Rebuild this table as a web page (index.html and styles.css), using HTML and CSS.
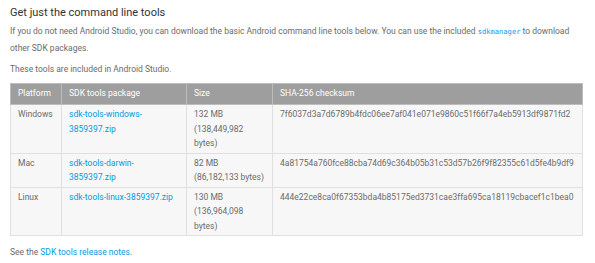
FILE: index.html
```html
<!DOCTYPE html>
<html lang="en">

<head>
    <meta charset="UTF-8">
    <meta name="viewport" content="width=device-width, initial-scale=1.0">
    <title>Get just the command line tools</title>
    <link rel="stylesheet" href="styles.css">
</head>

<body>
    <div class="section">
        <h2 class="title">Get just the command line tools</h2>
        <p>If you do not need Android Studio, you can download the basic Android command line tools below. You can use the included <code>sdkmanager</code> to download other SDK packages.</p>
        <p>These tools are included in Android Studio.</p>

        <table class="downloads">
            <thead>
                <tr>
                    <th class="col-platform">Platform</th>
                    <th class="col-package">SDK tools package</th>
                    <th class="col-size">Size</th>
                    <th>SHA-256 checksum</th>
                </tr>
            </thead>
            <tbody>
                <tr>
                    <td>Windows</td>
                    <td><a href="#">sdk-tools-windows-3859397.zip</a></td>
                    <td>132 MB<br>(138,449,982 bytes)</td>
                    <td>7f6037d3a7d6789b4fdc06ee7af041e071e9860c51f66f7a4eb5913df9871fd2</td>
                </tr>
                <tr>
                    <td>Mac</td>
                    <td><a href="#">sdk-tools-darwin-3859397.zip</a></td>
                    <td>82 MB<br>(86,182,133 bytes)</td>
                    <td>4a81754a760fce88cba74d69c364b05b31c53d57b26f9f82355c61d5fe4b9df9</td>
                </tr>
                <tr>
                    <td>Linux</td>
                    <td><a href="#">sdk-tools-linux-3859397.zip</a></td>
                    <td>130 MB<br>(136,964,098 bytes)</td>
                    <td>444e22ce8ca0f67353bda4b85175ed3731cae3ffa695ca18119cbacef1c1bea0</td>
                </tr>
            </tbody>
        </table>

        <p class="notes">See the <a href="#">SDK tools release notes</a>.</p>
    </div>
</body>

</html>
```

FILE: styles.css
```css
body {
    font-family: Roboto, 'Liberation Sans', sans-serif;
    background-color: #fff;
    color: #6b6b6b;
    margin: 0;
    font-size: 8.5px;
    line-height: 16px;
}

.section {
    padding: 5px 10px 0 10px;
}

.title {
    font-size: 11px;
    font-weight: 400;
    color: #333;
    margin: 0 0 2px 0;
    line-height: 16px;
}

p {
    margin: 0 0 5px 0;
}

code {
    font-family: 'DejaVu Sans Mono', 'Liberation Mono', monospace;
    font-size: 7.1px;
    color: #039be5;
}

a {
    color: #039be5;
    text-decoration: none;
}

.downloads {
    width: 573px;
    border-collapse: collapse;
    margin: 6px 0 8px 0;
    line-height: 14.5px;
    table-layout: fixed;
}

.downloads th,
.downloads td {
    box-sizing: border-box;
    text-align: left;
    vertical-align: top;
    padding: 2px 7px 2px 7px;
}

.downloads th {
    background-color: #9e9e9e;
    color: #fff;
    font-weight: 400;
    border: 1px solid #bdbdbd;
    line-height: 15px;
    padding-bottom: 3px;
}

.downloads td {
    background-color: #f7f7f7;
    border: 1px solid #e0e0e0;
}

.col-platform {
    width: 51px;
}

.col-package {
    width: 125px;
}

.col-size {
    width: 86px;
}

.notes {
    margin: 0;
}
```
